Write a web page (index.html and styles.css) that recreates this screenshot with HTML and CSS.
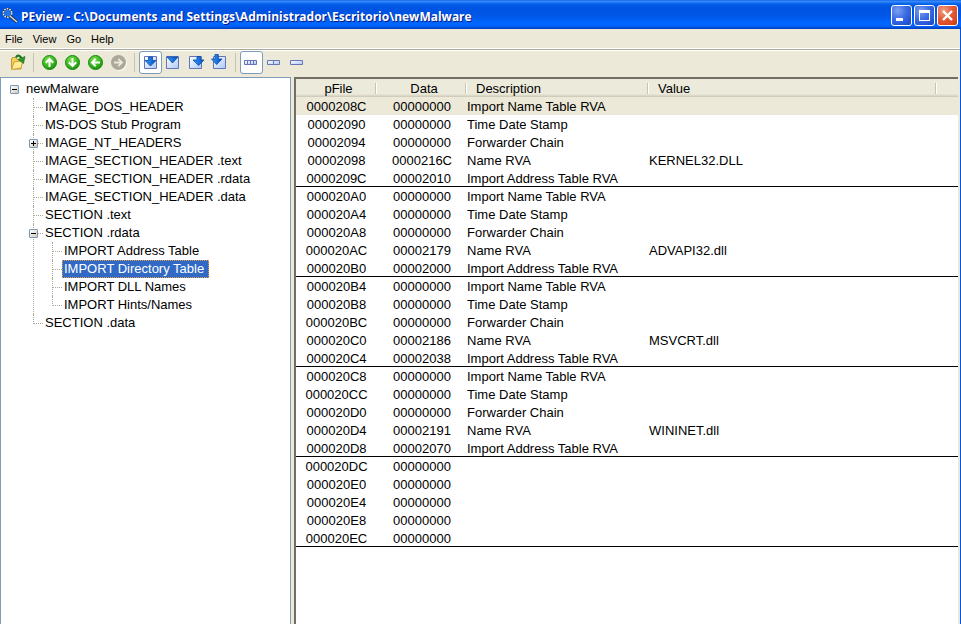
FILE: index.html
```html
<!DOCTYPE html>
<html lang="en">
<head>
<meta charset="utf-8">
<title>PEview</title>
<link rel="stylesheet" href="styles.css">
</head>
<body>
<svg class="defs" width="0" height="0" aria-hidden="true">
  <defs>
    <radialGradient id="green" cx=".4" cy=".3" r=".8">
      <stop offset="0" stop-color="#7be04e"/><stop offset=".6" stop-color="#35b31c"/><stop offset="1" stop-color="#12800c"/>
    </radialGradient>
    <linearGradient id="sheet" x1="0" y1="0" x2="1" y2="1">
      <stop offset="0" stop-color="#ffffff"/><stop offset="1" stop-color="#a9c8fa"/>
    </linearGradient>
    <linearGradient id="blue" x1="0" y1="0" x2="1" y2="0">
      <stop offset="0" stop-color="#2f9cf8"/><stop offset="1" stop-color="#0a50c0"/>
    </linearGradient>
  </defs>
</svg>
<div class="window">
  <header class="titlebar">
    <svg class="app-icon" width="16" height="16" viewBox="0 0 16 16" aria-hidden="true">
      <path d="M8.500 8.500L15 14" stroke="#26303c" stroke-width="3"/>
      <path d="M8.500 8.500L15 14" stroke="#d8dce0" stroke-width="1.600"/>
      <circle cx="5.500" cy="5" r="4.300" fill="#2374e6" stroke="#101820" stroke-width="1.400"/>
      <circle cx="5.500" cy="5" r="4.300" fill="none" stroke="#e8ecf0" stroke-width="1.400" stroke-dasharray="1.700 1"/>
    </svg>
    <h1 class="title">PEview - C:\Documents and Settings\Administrador\Escritorio\newMalware</h1>
    <div class="controls">
      <button class="control" type="button" aria-label="Minimize"><svg width="19" height="19"><path d="M4 12h7v3H4z" fill="#fff"/></svg></button>
      <button class="control" type="button" aria-label="Maximize"><svg width="19" height="19"><path d="M4 4h11v11H4zM5 7v7h9V7z" fill="#fff" fill-rule="evenodd"/></svg></button>
      <button class="control close" type="button" aria-label="Close"><svg width="19" height="19"><path d="M5 5l9 9M14 5l-9 9" stroke="#fff" stroke-width="2.400"/></svg></button>
    </div>
  </header>
  <div class="client">
    <nav class="menubar">
      <button type="button">File</button><button type="button">View</button><button type="button">Go</button><button type="button">Help</button>
    </nav>
    <div class="toolbar" role="toolbar" aria-label="Tools">
      <button class="tool" type="button" aria-label="Open"><svg width="17" height="17">
        <path d="M2.500 15V4.500l1.500-1h3l1 2h4V15z" fill="#f3cf5c" stroke="#c79a2c"/>
        <path d="M2.500 15.500L5 8l9-1.500L12 14z" fill="#ffec96" stroke="#d0a032"/>
        <path d="M7 3.500Q9-.5 12.500 4" fill="none" stroke="#1c7a1c" stroke-width="2.200"/>
        <path d="M9 5.500L16 2.500l-1.500 7z" fill="#2c982c" stroke="#166416" stroke-width=".6"/>
      </svg></button>
      <span class="sep"></span>
      <button class="tool" type="button" aria-label="Up"><svg width="17" height="17"><circle cx="8.500" cy="8.500" r="7" fill="url(#green)" stroke="#168a10"/><path d="M8.500 13V5M4.800 8.700L8.500 5l3.700 3.700" fill="none" stroke="#fff" stroke-width="2"/></svg></button>
      <button class="tool" type="button" aria-label="Down"><svg width="17" height="17"><circle cx="8.500" cy="8.500" r="7" fill="url(#green)" stroke="#168a10"/><path d="M8.500 4v8M4.800 8.300l3.700 3.700 3.700-3.700" fill="none" stroke="#fff" stroke-width="2"/></svg></button>
      <button class="tool" type="button" aria-label="Back"><svg width="17" height="17"><circle cx="8.500" cy="8.500" r="7" fill="url(#green)" stroke="#168a10"/><path d="M13 8.500H5M8.700 4.800L5 8.500l3.700 3.700" fill="none" stroke="#fff" stroke-width="2"/></svg></button>
      <button class="tool" type="button" aria-label="Forward" disabled><svg width="17" height="17"><circle cx="9.500" cy="9.500" r="7.300" fill="#fff"/><circle cx="8.500" cy="8.500" r="7.500" fill="#aca899"/><path d="M4 8.500h8M8.300 4.800L12 8.500l-3.700 3.700" fill="none" stroke="#ece9d8" stroke-width="1.800"/></svg></button>
      <span class="sep"></span>
      <button class="tool on" type="button" aria-label="Raw address"><svg width="17" height="17"><path d="M2.500 2.500h12v12h-12z" fill="url(#sheet)" stroke="#6875b5"/><path d="M6.500 3h4v3.500H14l-5.500 5.500L3 6.500h3.500z" fill="url(#blue)" stroke="#0b4aa8" stroke-width=".8"/></svg></button>
      <button class="tool" type="button" aria-label="Relative address"><svg width="17" height="17"><path d="M1.500 2.500h12v12h-12z" fill="url(#sheet)" stroke="#6875b5"/><path d="M2 3h11L7.500 9z" fill="url(#blue)" stroke="#0b4aa8" stroke-width=".8"/></svg></button>
      <button class="tool" type="button" aria-label="Virtual address"><svg width="17" height="17"><path d="M1.500 2.500h12v12h-12z" fill="url(#sheet)" stroke="#6875b5"/><path d="M9 2.500h3.500V6H16l-5.300 5.500L5 6h4z" fill="url(#blue)" stroke="#0b4aa8" stroke-width=".8"/></svg></button>
      <button class="tool" type="button" aria-label="File offset"><svg width="17" height="17"><path d="M2.500 2.500h12v12h-12z" fill="url(#sheet)" stroke="#6875b5"/><path d="M4 .4h3.300V5H11L5.700 10.500.5 5H4z" fill="url(#blue)" stroke="#0b4aa8" stroke-width=".8"/></svg></button>
      <span class="sep"></span>
      <button class="tool on" type="button" aria-label="Byte view"><svg width="17" height="17"><path d="M1.500 6.500h12v4h-12z" fill="url(#sheet)" stroke="#6875b5"/><path d="M4.500 6v5M7.500 6v5M10.500 6v5" stroke="#6875b5"/></svg></button>
      <button class="tool" type="button" aria-label="Word view"><svg width="17" height="17"><path d="M1.500 6.500h12v4h-12z" fill="url(#sheet)" stroke="#6875b5"/><path d="M7.500 6v5" stroke="#6875b5"/></svg></button>
      <button class="tool" type="button" aria-label="Long view"><svg width="17" height="17"><path d="M1.500 6.500h12v4h-12z" fill="url(#sheet)" stroke="#6875b5"/></svg></button>
    </div>
    <main class="panes">
      <nav class="tree" aria-label="Structure">
        <div class="node"><button class="toggle" type="button" aria-label="Collapse newMalware"></button><a href="#">newMalware</a></div>
        <ul>
          <li><div class="node"><a href="#">IMAGE_DOS_HEADER</a></div></li>
          <li><div class="node"><a href="#">MS-DOS Stub Program</a></div></li>
          <li><div class="node"><button class="toggle plus" type="button" aria-label="Expand IMAGE_NT_HEADERS"></button><a href="#">IMAGE_NT_HEADERS</a></div></li>
          <li><div class="node"><a href="#">IMAGE_SECTION_HEADER .text</a></div></li>
          <li><div class="node"><a href="#">IMAGE_SECTION_HEADER .rdata</a></div></li>
          <li><div class="node"><a href="#">IMAGE_SECTION_HEADER .data</a></div></li>
          <li><div class="node"><a href="#">SECTION .text</a></div></li>
          <li><div class="node"><button class="toggle" type="button" aria-label="Collapse SECTION .rdata"></button><a href="#">SECTION .rdata</a></div>
            <ul>
              <li><div class="node"><a href="#">IMPORT Address Table</a></div></li>
              <li><div class="node"><a class="selected" href="#">IMPORT Directory Table</a></div></li>
              <li><div class="node"><a href="#">IMPORT DLL Names</a></div></li>
              <li><div class="node"><a href="#">IMPORT Hints/Names</a></div></li>
            </ul>
          </li>
          <li><div class="node"><a href="#">SECTION .data</a></div></li>
        </ul>
      </nav>
      <section class="list">
        <table>
          <colgroup><col class="c-file"><col class="c-data"><col class="c-desc"><col class="c-value"><col></colgroup>
          <thead><tr><th>pFile</th><th>Data</th><th>Description</th><th>Value</th><td></td></tr></thead>
          <tbody>
            <tr class="current"><td>0000208C</td><td>00000000</td><td>Import Name Table RVA</td><td></td><td></td></tr>
            <tr><td>00002090</td><td>00000000</td><td>Time Date Stamp</td><td></td><td></td></tr>
            <tr><td>00002094</td><td>00000000</td><td>Forwarder Chain</td><td></td><td></td></tr>
            <tr><td>00002098</td><td>0000216C</td><td>Name RVA</td><td>KERNEL32.DLL</td><td></td></tr>
            <tr><td>0000209C</td><td>00002010</td><td>Import Address Table RVA</td><td></td><td></td></tr>
          </tbody>
          <tbody>
            <tr><td>000020A0</td><td>00000000</td><td>Import Name Table RVA</td><td></td><td></td></tr>
            <tr><td>000020A4</td><td>00000000</td><td>Time Date Stamp</td><td></td><td></td></tr>
            <tr><td>000020A8</td><td>00000000</td><td>Forwarder Chain</td><td></td><td></td></tr>
            <tr><td>000020AC</td><td>00002179</td><td>Name RVA</td><td>ADVAPI32.dll</td><td></td></tr>
            <tr><td>000020B0</td><td>00002000</td><td>Import Address Table RVA</td><td></td><td></td></tr>
          </tbody>
          <tbody>
            <tr><td>000020B4</td><td>00000000</td><td>Import Name Table RVA</td><td></td><td></td></tr>
            <tr><td>000020B8</td><td>00000000</td><td>Time Date Stamp</td><td></td><td></td></tr>
            <tr><td>000020BC</td><td>00000000</td><td>Forwarder Chain</td><td></td><td></td></tr>
            <tr><td>000020C0</td><td>00002186</td><td>Name RVA</td><td>MSVCRT.dll</td><td></td></tr>
            <tr><td>000020C4</td><td>00002038</td><td>Import Address Table RVA</td><td></td><td></td></tr>
          </tbody>
          <tbody>
            <tr><td>000020C8</td><td>00000000</td><td>Import Name Table RVA</td><td></td><td></td></tr>
            <tr><td>000020CC</td><td>00000000</td><td>Time Date Stamp</td><td></td><td></td></tr>
            <tr><td>000020D0</td><td>00000000</td><td>Forwarder Chain</td><td></td><td></td></tr>
            <tr><td>000020D4</td><td>00002191</td><td>Name RVA</td><td>WININET.dll</td><td></td></tr>
            <tr><td>000020D8</td><td>00002070</td><td>Import Address Table RVA</td><td></td><td></td></tr>
          </tbody>
          <tbody>
            <tr><td>000020DC</td><td>00000000</td><td></td><td></td><td></td></tr>
            <tr><td>000020E0</td><td>00000000</td><td></td><td></td><td></td></tr>
            <tr><td>000020E4</td><td>00000000</td><td></td><td></td><td></td></tr>
            <tr><td>000020E8</td><td>00000000</td><td></td><td></td><td></td></tr>
            <tr><td>000020EC</td><td>00000000</td><td></td><td></td><td></td></tr>
          </tbody>
        </table>
      </section>
    </main>
  </div>
</div>
</body>
</html>
```
FILE: styles.css
```css
* { box-sizing: border-box; }
body {
  margin: 0;
  background: #ece9d8;
  color: #000;
  font: 13px/18px "Liberation Sans", Arial, sans-serif;
}
button { margin: 0; padding: 0; border: 0; background: none; color: inherit; font: inherit; }
svg { display: block; }
.defs { position: absolute; }
.window { display: flex; flex-direction: column; height: 100vh; overflow: hidden; }

.titlebar {
  display: flex;
  align-items: center;
  flex: none;
  height: 29px;
  padding: 2px 3px 0 2px;
  background: linear-gradient(#0a50dc 0, #3c94ff 1px, #2a80f8 2px, #0560e8 4px, #0054e3 7px, #0055e5 15px, #0066ff 23px, #0064fa 26px, #0048d0 28px, #003cb8 29px);
}
.app-icon { flex: none; }
.title {
  flex: 1;
  margin: 0;
  padding: 2px 0 0 3px;
  overflow: hidden;
  color: #fff;
  font: bold 12px/20px "Open Sans", sans-serif;
  text-shadow: 1px 1px 0 #0a1883;
  white-space: nowrap;
}
.controls { display: flex; gap: 2px; }
.control {
  width: 21px;
  height: 21px;
  border: 1px solid #fff;
  border-radius: 3px;
  background: radial-gradient(circle at 30% 25%, #7b9ff0 0, #3c6be4 45%, #2353d2 80%, #1a45bd 100%);
}
.close { background: radial-gradient(circle at 30% 25%, #f0a088 0, #e45c38 45%, #d8451f 80%, #b83410 100%); }

.client {
  display: flex;
  flex: 1;
  flex-direction: column;
  min-height: 0;
  border-right: 1px solid #0054e3;
}
.menubar {
  display: flex;
  flex: none;
  gap: 10px;
  height: 19px;
  padding-left: 5px;
  font-size: 11px;
}
.toolbar {
  display: flex;
  flex: none;
  align-items: center;
  height: 29px;
  padding: 0 6px 2px;
  border-top: 1px solid #fff;
  box-shadow: inset 0 1px #aca899, inset 0 2px #fff;
}
.tool {
  display: grid;
  place-items: center;
  width: 23px;
  height: 23px;
  border: 1px solid transparent;
  border-radius: 3px;
}
.tool.on { border-color: #7f9db9; background: #fff; }
.sep { width: 1px; height: 19px; margin: 0 4px; background: #c5c2b2; }

.panes { display: flex; flex: 1; gap: 3px; min-height: 0; padding-right: 2px; }
.tree {
  flex: 0 0 291px;
  padding: 2px 0 0 6px;
  overflow: hidden;
  border: 1px solid #7f9db9;
  border-bottom: 0;
  background: #fff;
}
.tree ul { margin: 0; padding: 0 0 0 19px; list-style: none; }
.tree li { position: relative; }
.tree li::before {
  position: absolute;
  top: 0;
  bottom: 0;
  left: 7px;
  border-left: 1px dotted #aca899;
  content: "";
}
.tree li:last-child::before { bottom: auto; height: 10px; }
.tree li::after {
  position: absolute;
  top: 9px;
  left: 8px;
  width: 9px;
  border-top: 1px dotted #aca899;
  content: "";
}
.node { display: flex; align-items: center; height: 18px; padding-left: 17px; }
.node a { padding: 0 2px; color: #000; text-decoration: none; white-space: nowrap; }
.node .selected {
  padding: 0 4px 0 1px;
  border: 1px dotted #e0a050;
  background: #316ac5;
  color: #fff;
  line-height: 16px;
}
.toggle {
  position: relative;
  z-index: 1;
  flex: none;
  width: 9px;
  height: 9px;
  margin: 1px 5px 0 -14px;
  border: 1px solid #7898b5;
  border-radius: 1px;
  background: linear-gradient(#000, #000) center / 5px 1px no-repeat, linear-gradient(135deg, #fff, #d0cab8);
}
.toggle.plus {
  background: linear-gradient(#000, #000) center / 5px 1px no-repeat, linear-gradient(#000, #000) center / 1px 5px no-repeat, linear-gradient(135deg, #fff, #d0cab8);
}

.list {
  flex: 1;
  min-width: 0;
  overflow: hidden;
  border-top: 2px solid #716f64;
  border-left: 2px solid #716f64;
  background: #fff;
}
table { width: 100%; border-collapse: separate; border-spacing: 0; table-layout: fixed; }
.c-file { width: 81px; }
.c-data { width: 90px; }
.c-desc { width: 182px; }
.c-value { width: 288px; }
th, td { height: 18px; padding: 0; font-weight: normal; line-height: 16px; text-align: left; white-space: nowrap; }
th:nth-child(-n+2) { padding-left: 4px; }
th:nth-child(-n+2), td:nth-child(-n+2) { text-align: center; }
th, tbody td { padding-top: 2px; }
thead th, thead td {
  background: linear-gradient(to top, #cbc7b8 0, #d6d2c2 1px, #e2decd 2px, #ebeadb 3px);
}
thead th {
  background: linear-gradient(#c7c5b2, #c7c5b2) right 1px top 4px / 1px 11px no-repeat,
    linear-gradient(#fff, #fff) right 0 top 4px / 1px 11px no-repeat,
    linear-gradient(to top, #cbc7b8 0, #d6d2c2 1px, #e2decd 2px, #ebeadb 3px);
}
th:nth-child(n+3) { padding-left: 9px; }
tbody tr:last-child td { border-bottom: 1px solid #000; line-height: 15px; }
.current td { background: #ece9d8; }
```
